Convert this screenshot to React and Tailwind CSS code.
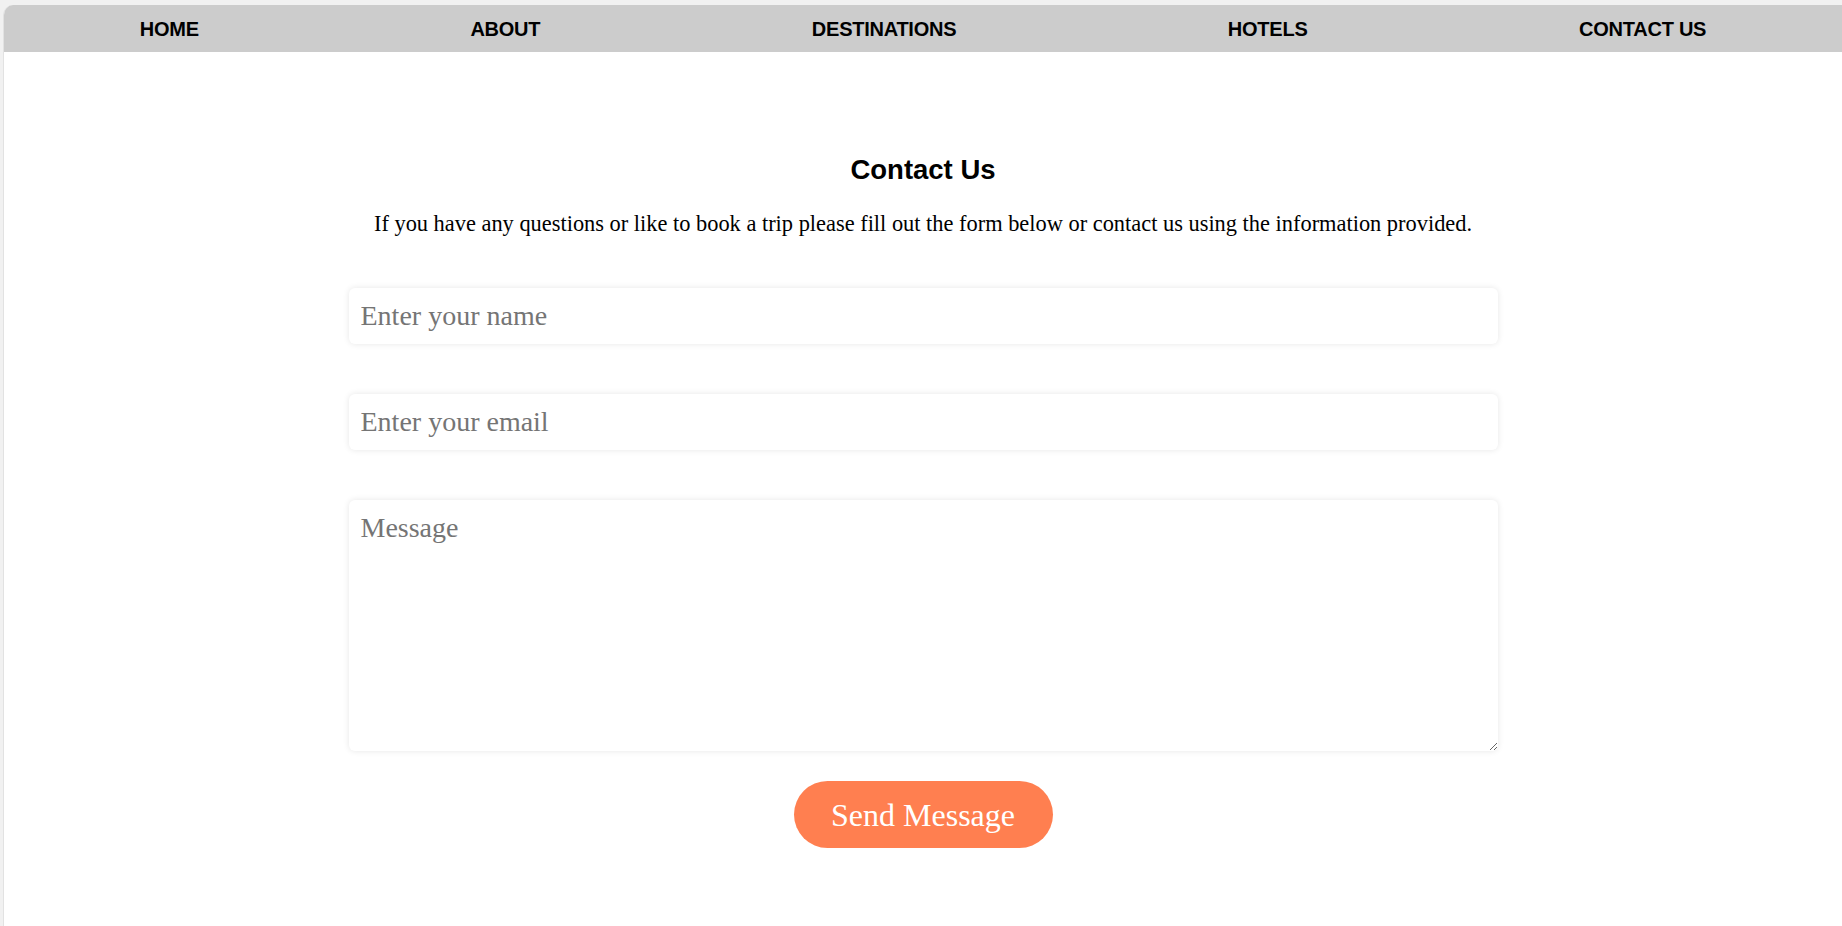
import React from "react";

export default function App() {
  const links = ["HOME", "ABOUT", "DESTINATIONS", "HOTELS", "CONTACT US"];
  return (
    <div className="min-h-[926px] w-full bg-[#f1f1f1] pt-[5px] pl-[3px]">
      <div className="min-h-[921px] bg-white border-l border-[#e2e2e2] rounded-tl-[10px] overflow-hidden">
        <nav className="h-[47px] bg-[#cccccc] flex items-center justify-around">
          {links.map((l) => (
            <a
              key={l}
              href="#"
              className="text-black font-bold text-[20px] leading-none tracking-[-0.25px] [font-family:'Liberation_Sans',Arial,sans-serif]"
            >
              {l}
            </a>
          ))}
        </nav>
        <main className="flex flex-col items-center pt-[102px]">
          <h2 className="text-[27.5px] leading-[31px] font-bold text-black [font-family:'Liberation_Sans',Arial,sans-serif]">
            Contact Us
          </h2>
          <p className="mt-[26px] text-[22.4px] leading-[26px] text-black [font-family:'Liberation_Serif','Times_New_Roman',serif]">
            If you have any questions or like to book a trip please fill out the form below or contact us using the information provided.
          </p>
          <form className="w-[1149px] mt-[51px] flex flex-col items-center [font-family:'Liberation_Serif','Times_New_Roman',serif]">
            <input
              type="text"
              placeholder="Enter your name"
              className="w-full h-[56px] px-[12px] text-[28px] rounded-[6px] bg-white outline-none shadow-[0_0_6px_rgba(0,0,0,0.1)] placeholder:text-[#757575]"
            />
            <input
              type="email"
              placeholder="Enter your email"
              className="w-full h-[56px] mt-[50px] px-[12px] text-[28px] rounded-[6px] bg-white outline-none shadow-[0_0_6px_rgba(0,0,0,0.1)] placeholder:text-[#757575]"
            />
            <textarea
              placeholder="Message"
              className="w-full h-[251px] mt-[50px] px-[12px] py-[12px] text-[28px] leading-[32px] rounded-[6px] bg-white outline-none shadow-[0_0_6px_rgba(0,0,0,0.1)] placeholder:text-[#757575]"
            />
            <button
              type="button"
              className="mt-[30px] w-[259px] h-[67px] rounded-full bg-[#ff7f50] text-white text-[32px] leading-none"
            >
              Send Message
            </button>
          </form>
        </main>
      </div>
    </div>
  );
}
